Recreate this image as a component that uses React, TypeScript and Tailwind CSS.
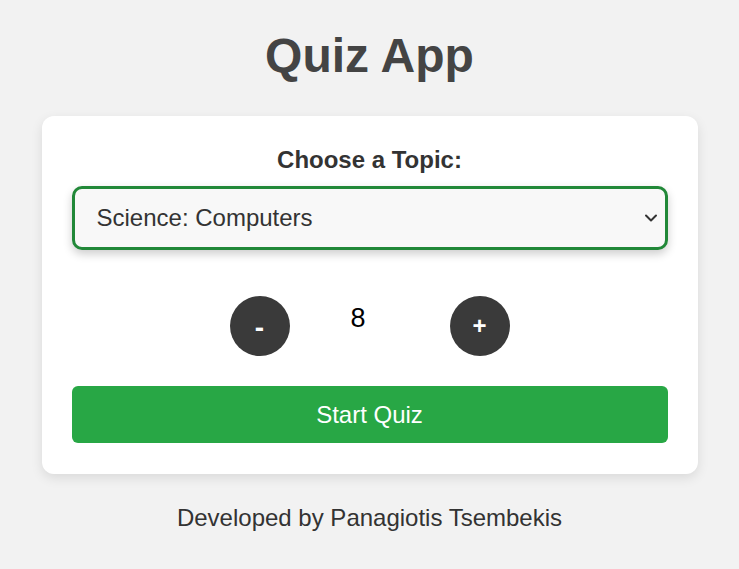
import { useState } from 'react'

const topics = [
  'General Knowledge',
  'Science: Computers',
  'Science & Nature',
  'History',
  'Geography',
  'Sports',
]

export default function App() {
  const [topic, setTopic] = useState('Science: Computers')
  const [count, setCount] = useState(8)

  return (
    <div className="min-h-screen bg-[#f2f2f2] flex flex-col items-center font-['Liberation_Sans',Arial,sans-serif]">
      <h1 className="mt-[28px] mb-[32px] text-[48px] leading-[56px] font-bold text-[#444444]">Quiz App</h1>

      {/* Card */}
      <div className="w-[656px] bg-white rounded-[12px] shadow-[0_4px_12px_rgba(0,0,0,0.1)] px-[30px] pt-[30px] pb-[31px] flex flex-col">
        <label className="text-center text-[24px] leading-[28px] font-bold text-[#333333] mb-[12px]">
          Choose a Topic:
        </label>

        <div className="relative">
          <select
            value={topic}
            onChange={(e) => setTopic(e.target.value)}
            className="w-full h-[64px] appearance-none bg-[#f8f8f8] border-[3px] border-[#218838] rounded-[10px] pl-[22px] pr-10 text-[24px] text-[#333333] shadow-[0_4px_10px_rgba(0,0,0,0.2)] outline-none font-['Liberation_Sans',Arial,sans-serif]"
          >
            {topics.map((t) => (
              <option key={t} value={t}>
                {t}
              </option>
            ))}
          </select>
          <svg
            className="absolute right-[10px] top-1/2 -translate-y-1/2 pointer-events-none"
            width="14"
            height="9"
            viewBox="0 0 14 9"
            fill="none"
          >
            <path d="M2 2l5 5 5-5" stroke="#333" strokeWidth="2" strokeLinecap="round" strokeLinejoin="round" />
          </svg>
        </div>

        {/* Question count */}
        <div className="flex items-center justify-center mt-[46px]">
          <button
            onClick={() => setCount(Math.max(1, count - 1))}
            className="w-[60px] h-[60px] rounded-full bg-[#3a3a3a] text-white text-[28px] font-bold leading-none flex items-center justify-center pt-[4px]"
          >
            -
          </button>
          <div className="w-[160px] pl-[61px] self-start mt-[7px] text-[27px] leading-[30px] text-black">{count}</div>
          <button
            onClick={() => setCount(count + 1)}
            className="w-[60px] h-[60px] rounded-full bg-[#3a3a3a] text-white text-[24px] font-bold leading-none flex items-center justify-center"
          >
            +
          </button>
        </div>

        <button className="mt-[30px] h-[57px] w-full rounded-[6px] bg-[#28a745] text-white text-[24px]">
          Start Quiz
        </button>
      </div>

      <p className="mt-[30px] text-[24px] leading-[28px] text-[#333333]">Developed by Panagiotis Tsembekis</p>
    </div>
  )
}
